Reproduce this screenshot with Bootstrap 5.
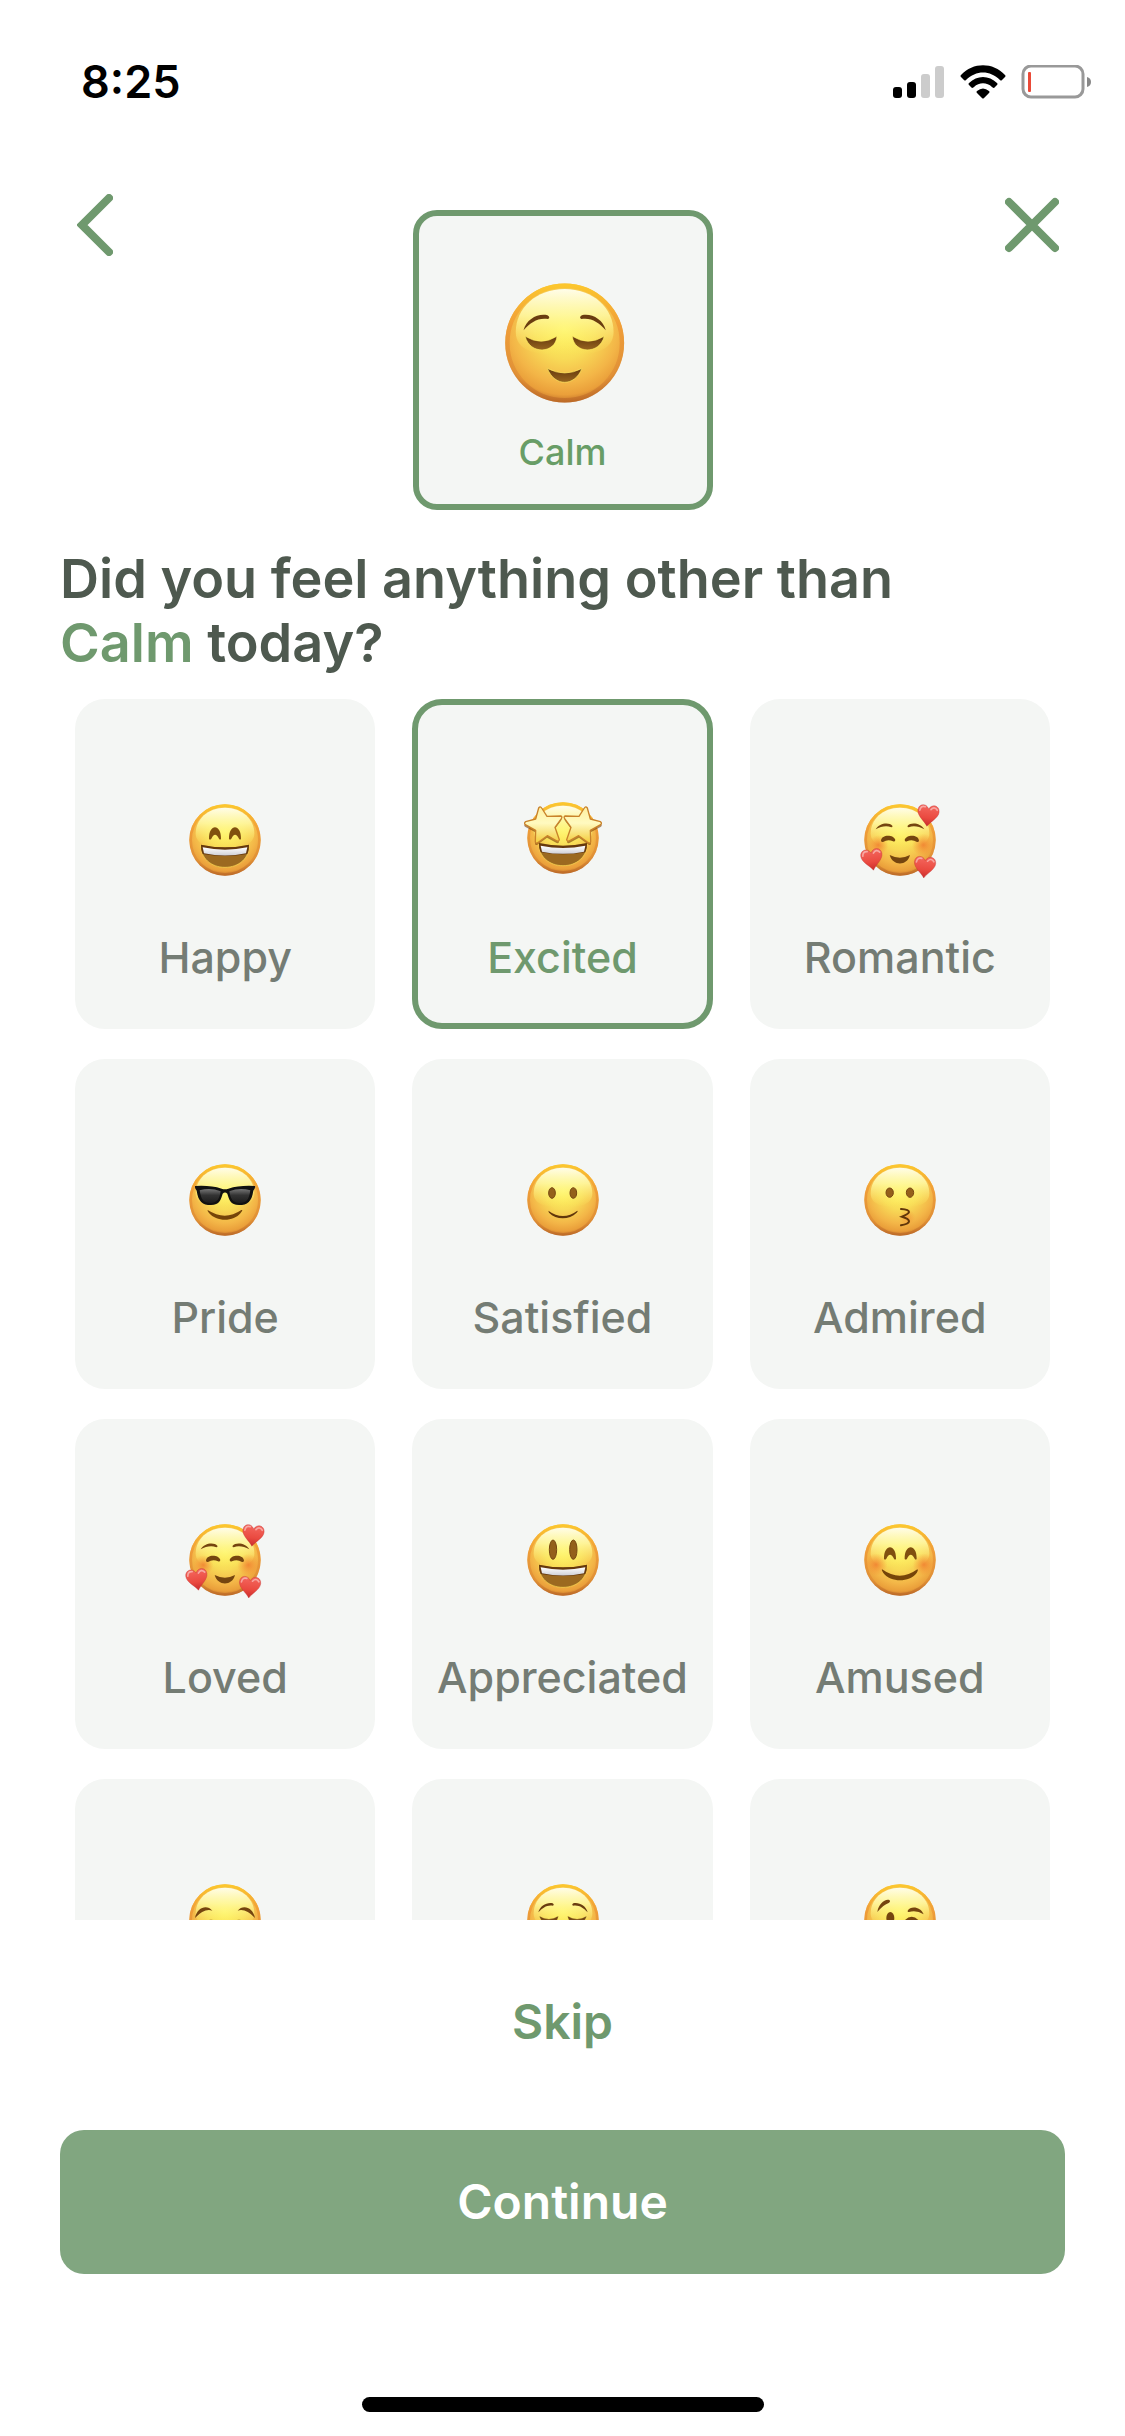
<!DOCTYPE html>
<html lang="en">
<head>
<meta charset="utf-8">
<meta name="viewport" content="width=device-width, initial-scale=1">
<title>Mood check-in</title>
<link href="https://cdn.jsdelivr.net/npm/bootstrap@5.3.0/dist/css/bootstrap.min.css" rel="stylesheet">
<style>
  :root { --leaf: #6f996e; --mist: #f4f6f4; }
  body { font-family: Inter, "Liberation Sans", sans-serif; background: #fff; color: #4e594f; }
  svg { display: block; }
  .screen { padding: 0; }
  .status { padding: 52px 34px 0 81px; }
  .clock { font-size: 45px; line-height: 60px; font-weight: 600; color: #000; }
  .top { padding: 82px 66px 0 77px; }
  .top .side { flex: 1 1 0; }
  .plain { background: none; border: 0; padding: 0; color: var(--leaf); }
  .chosen { width: 300px; margin: 16px 0 0 -11px; padding: 57px 0 30px; border: 6px solid var(--leaf); border-radius: 24px; background: var(--mist); gap: 17px; }
  .chosen-name { font-size: 36px; line-height: 44px; font-weight: 500; color: #689d66; }
  .question { font-size: 54px; line-height: 64px; font-weight: 600; margin: 0; padding: 37px 60px 24px; }
  .leaf { color: var(--leaf); }
  .moods { min-height: 0; padding: 0 75px; overflow-x: hidden; overflow-y: auto; scrollbar-width: none; }
  .moods::-webkit-scrollbar { display: none; }
  .moods .row { --bs-gutter-x: 37px; --bs-gutter-y: 30px; }
  .mood { width: 100%; padding: 93px 0 41px; gap: 50px; border: 6px solid transparent; border-radius: 30px; background: var(--mist); color: #747c74; font-size: 43px; line-height: 50px; font-weight: 500; }
  .mood[aria-pressed="true"] { border-color: var(--leaf); color: var(--leaf); }
  .actions { padding: 72px 60px 0; }
  .skip { font-size: 48px; line-height: 60px; font-weight: 600; }
  .go { margin-top: 78px; padding: 42px 0; border: 0; border-radius: 24px; font-size: 48px; line-height: 60px; font-weight: 600; color: #fff; background: #81a680; }
  .home { padding: 123px 0 24px; }
  .home-bar { width: 402px; height: 15px; border-radius: 8px; background: #000; }
</style>
</head>
<body>
<svg width="0" height="0" class="position-absolute" aria-hidden="true">
  <defs>
    <radialGradient id="skin" cx="0.5" cy="0.38" r="0.63">
      <stop offset="0" stop-color="#fff562"/><stop offset=".4" stop-color="#f8db57"/>
      <stop offset=".72" stop-color="#f3b547"/><stop offset=".88" stop-color="#ea9f3a"/><stop offset="1" stop-color="#bd6a26"/>
    </radialGradient>
    <linearGradient id="rim" x1="0" y1="0" x2="0" y2="1">
      <stop offset="0" stop-color="#fcc62d"/><stop offset=".35" stop-color="#f09a36" stop-opacity=".85"/><stop offset=".8" stop-color="#d47d30" stop-opacity=".4"/><stop offset="1" stop-color="#b86526" stop-opacity=".6"/>
    </linearGradient>
    <linearGradient id="shine" x1="0" y1="0" x2="0" y2="1">
      <stop offset="0" stop-color="#fffde9"/><stop offset=".4" stop-color="#fffaa4" stop-opacity=".85"/><stop offset="1" stop-color="#fff35c" stop-opacity="0"/>
    </linearGradient>
    <linearGradient id="dark" x1="0" y1="0" x2="0" y2="1"><stop offset="0" stop-color="#65380d"/><stop offset="1" stop-color="#97651f"/></linearGradient>
    <linearGradient id="teeth" x1="0" y1="0" x2="0" y2="1"><stop offset="0" stop-color="#fff"/><stop offset="1" stop-color="#cfd0d6"/></linearGradient>
    <radialGradient id="blush"><stop offset="0" stop-color="#f0762c" stop-opacity=".75"/><stop offset="1" stop-color="#f58a30" stop-opacity="0"/></radialGradient>
    <linearGradient id="red" x1="0" y1="0" x2="0" y2="1"><stop offset="0" stop-color="#f4675e"/><stop offset=".6" stop-color="#ea4a40"/><stop offset="1" stop-color="#c92b2c"/></linearGradient>
    <linearGradient id="gold" x1="0" y1="0" x2="0" y2="1"><stop offset="0" stop-color="#fff0a0"/><stop offset=".45" stop-color="#fffac0"/><stop offset="1" stop-color="#f3cb38"/></linearGradient>
    <linearGradient id="lens" x1="0" y1="0" x2="0" y2="1"><stop offset="0" stop-color="#777"/><stop offset=".45" stop-color="#333"/><stop offset="1" stop-color="#1c1c1c"/></linearGradient>

    <g id="face">
      <circle r="107" fill="url(#skin)"/>
      <circle r="103" fill="none" stroke="url(#rim)" stroke-width="8"/>
      <path d="M0-97C52-97 88-62 88-20C88 15 50 22 0 22S-88 15-88-20C-88-62-52-97 0-97Z" fill="url(#shine)"/>
    </g>
    <g id="grin">
      <path d="M-72 14Q0 30 72 14C74 54 42 82 0 82S-74 54-72 14Z" fill="#9b6920" stroke="#fbdc55" stroke-width="2"/>
      <path d="M-72 14Q0 30 72 14Q73 30 67 42Q0 54-67 42Q-73 30-72 14Z" fill="#65380d"/>
      <path d="M-67 22Q0 36 67 22L63 40Q0 53-63 40Z" fill="url(#teeth)"/>
    </g>
    <g id="heart">
      <path d="M0 32C-9 17-32 4-32-14C-32-34-8-38 0-20C8-38 32-34 32-14C32 4 9 17 0 32Z" fill="url(#red)" stroke="#bd2d2d" stroke-width="1"/>
      <path d="M-26-14Q-24-29-11-26M7-19Q17-31 26-19" fill="none" stroke="#fff" stroke-opacity=".45" stroke-width="5" stroke-linecap="round"/>
    </g>
    <g id="calm">
      <use href="#face"/>
      <g fill="#6a3d10">
        <path d="M-74-23C-69-43-48-54-31-50Q-25-46-30-43C-48-46-61-37-74-23Z"/>
        <path d="M74-23C69-43 48-54 31-50Q25-46 30-43C48-46 61-37 74-23Z"/>
      </g>
      <g fill="url(#dark)" stroke="#fff066" stroke-opacity=".7" stroke-width="1.5">
        <path d="M-71-12Q-42 6-14-12C-16 19-63 22-71-12Z"/><path d="M71-12Q42 6 14-12C16 19 63 22 71-12Z"/>
        <path d="M-31 46Q0 62 31 46C18 79-18 79-31 46Z"/>
      </g>
    </g>
    <g id="loving">
      <use href="#face"/>
      <circle cx="-65" cy="15" r="30" fill="url(#blush)"/><circle cx="70" cy="15" r="34" fill="url(#blush)"/>
      <g fill="#75450f">
        <path d="M-73-32C-62-52-32-54-23-43Q-21-38-26-38C-42-44-57-40-73-32Z"/>
        <path d="M73-32C62-52 32-54 23-43Q21-38 26-38C42-44 57-40 73-32Z"/>
        <path d="M-57 2C-55-18-18-16-14 0Q-15 6-21 4Q-36-4-51 6Q-56 7-57 2Z"/>
        <path d="M57 2C55-18 18-16 14 0Q15 6 21 4Q36-4 51 6Q56 7 57 2Z"/>
        <path d="M-31 45Q0 61 30 45C22 79-22 79-31 45Z"/>
      </g>
      <use href="#heart" transform="translate(84 -73) rotate(6)"/>
      <use href="#heart" transform="translate(-84 59) rotate(-8)"/>
      <use href="#heart" transform="translate(74 82) rotate(5)"/>
    </g>
    <path id="star-shape" d="M-73-96Q-68-103-64-96L-48-71L-7-72Q-1-70-5-64L-24-38L-11-1Q-12 5-18 3L-47-13L-77 9Q-84 10-83 3L-82-29L-113-46Q-118-51-112-55L-82-63Z"/>
    <g id="star">
      <use href="#star-shape" fill="url(#gold)" stroke="#c9822a" stroke-width="4" stroke-linejoin="round"/>
    </g>
  </defs>
</svg>

<div class="screen container-fluid vh-100 d-flex flex-column">
  <div class="status d-flex justify-content-between align-items-center">
    <span class="clock">8:25</span>
    <svg width="198" height="34" viewBox="0 0 198 34" role="img" aria-label="Signal, Wi-Fi and low battery">
      <rect y="22" width="9" height="11" rx="3"/><rect x="14" y="17" width="9" height="16" rx="3"/>
      <rect x="28" y="9" width="9" height="24" rx="3" fill="#ccc"/><rect x="42" y="1" width="9" height="32" rx="3" fill="#ccc"/>
      <path d="M68 10C80-3 100-3 112 10Q113 11 112 12L109 15Q108 16 107 15C97 5 83 5 73 15Q72 16 71 15L68 12Q67 11 68 10ZM76 18C84 10 96 10 104 18Q105 19 104 20L101 23Q100 23 99 22C94 17 86 17 81 22Q80 23 79 23L76 20Q75 19 76 18ZM84 26Q90 21 96 26Q97 27 96 28L91 33Q90 34 89 33L84 28Q83 27 84 26Z"/>
      <rect x="130" y="1" width="60" height="31" rx="8" fill="none" stroke="#999" stroke-width="3"/>
      <rect x="135" y="7" width="3" height="20" rx="1" fill="#ea4a38"/><path d="M194 12Q198 13 198 17T194 22Z" fill="#888"/>
    </svg>
  </div>

  <header class="top d-flex align-items-start">
    <div class="side d-flex justify-content-start">
      <button type="button" class="plain" aria-label="Back">
        <svg width="36" height="62" viewBox="0 0 36 62" fill="none" stroke="currentColor" stroke-width="8" stroke-linecap="round" stroke-linejoin="miter"><path d="M32 4L5 31L32 58"/></svg>
      </button>
    </div>
    <div class="chosen d-flex flex-column align-items-center">
      <svg width="140" height="140" viewBox="-129 -126 252 252" aria-hidden="true"><use href="#calm"/></svg>
      <span class="chosen-name">Calm</span>
    </div>
    <div class="side d-flex justify-content-end">
      <button type="button" class="plain" aria-label="Close">
        <svg width="54" height="62" viewBox="0 0 54 62" fill="none" stroke="currentColor" stroke-width="8" stroke-linecap="round"><path d="M4 8L50 54M50 8L4 54"/></svg>
      </button>
    </div>
  </header>

  <h1 class="question">Did you feel anything other than<br><span class="leaf">Calm</span> today?</h1>

  <main class="moods flex-grow-1">
    <div class="row row-cols-3">
      <div class="col"><button type="button" class="mood d-flex flex-column align-items-center" aria-pressed="false">
        <svg width="84" height="84" viewBox="-126 -126 252 252" aria-hidden="true"><use href="#face"/><g fill="#80500f"><path id="arch" d="M-48-3C-49-50-11-50-12-3Q-15 1-18-4Q-30-27-41-4Q-45 1-48-3Z"/><use href="#arch" x="60"/></g><use href="#grin"/></svg>
        <span>Happy</span></button></div>
      <div class="col"><button type="button" class="mood d-flex flex-column align-items-center" aria-pressed="true">
        <svg width="84" height="84" viewBox="-129 -126 252 252" aria-hidden="true"><use href="#face" y="-6"/><use href="#grin" y="-5"/><g fill="#7a3f08" opacity=".6"><use href="#star-shape" x="-1" y="6"/><use href="#star-shape" transform="translate(1 6) scale(-1 1)"/></g><use href="#star"/><use href="#star" transform="scale(-1 1)"/></svg>
        <span>Excited</span></button></div>
      <div class="col"><button type="button" class="mood d-flex flex-column align-items-center" aria-pressed="false">
        <svg width="84" height="84" viewBox="-126 -126 252 252" aria-hidden="true"><use href="#loving"/></svg>
        <span>Romantic</span></button></div>

      <div class="col"><button type="button" class="mood d-flex flex-column align-items-center" aria-pressed="false">
        <svg width="84" height="84" viewBox="-126 -126 252 252" aria-hidden="true"><use href="#face"/>
          <path d="M-90-42Q-45-45-10-34Q0-30 10-34Q45-45 90-42Q92-34 85-28C80 5 68 15 42 15C16 15 12-3 7-19Q0-26-7-19C-12-3-16 15-42 15C-68 15-80 5-85-28Q-92-34-90-42Z" fill="#111"/>
          <path d="M-76-29Q-44-39-13-26C-16-5-23 9-43 9C-64 9-72 0-76-29ZM76-29Q44-39 13-26C16-5 23 9 43 9C64 9 72 0 76-29Z" fill="url(#lens)"/>
          <path d="M-52 30Q0 64 49 30C55 29 50 35 47 39C26 66-26 66-48 39Q-54 32-52 30Z" fill="#754409"/></svg>
        <span>Pride</span></button></div>
      <div class="col"><button type="button" class="mood d-flex flex-column align-items-center" aria-pressed="false">
        <svg width="84" height="84" viewBox="-129 -126 252 252" aria-hidden="true"><use href="#face"/><g fill="#94601b" stroke="#784811" stroke-width="3"><ellipse cx="-33" cy="-21" rx="10" ry="16"/><ellipse cx="31" cy="-21" rx="10" ry="16"/></g><path d="M-44 32Q0 64 43 32Q46 33 41 38C18 60-20 60-42 38Z" fill="#61360a"/></svg>
        <span>Satisfied</span></button></div>
      <div class="col"><button type="button" class="mood d-flex flex-column align-items-center" aria-pressed="false">
        <svg width="84" height="84" viewBox="-126 -126 252 252" aria-hidden="true"><use href="#face"/><circle cx="22" cy="52" r="24" fill="url(#blush)" opacity=".6"/><g fill="#94601b" stroke="#784811" stroke-width="3"><ellipse cx="-31" cy="-22" rx="11" ry="14"/><ellipse cx="30" cy="-22" rx="11" ry="14"/></g><path d="M3 27Q27 29 27 36Q27 41 6 50Q27 56 27 64Q27 72 3 76" fill="none" stroke="#61360a" stroke-width="6" stroke-linecap="round"/></svg>
        <span>Admired</span></button></div>

      <div class="col"><button type="button" class="mood d-flex flex-column align-items-center" aria-pressed="false">
        <svg width="84" height="84" viewBox="-126 -126 252 252" aria-hidden="true"><use href="#loving"/></svg>
        <span>Loved</span></button></div>
      <div class="col"><button type="button" class="mood d-flex flex-column align-items-center" aria-pressed="false">
        <svg width="84" height="84" viewBox="-129 -126 252 252" aria-hidden="true"><use href="#face"/><g fill="#94601b" stroke="#784811" stroke-width="3"><ellipse cx="-30" cy="-31" rx="11" ry="29"/><ellipse cx="31" cy="-31" rx="11" ry="29"/></g><use href="#grin"/></svg>
        <span>Appreciated</span></button></div>
      <div class="col"><button type="button" class="mood d-flex flex-column align-items-center" aria-pressed="false">
        <svg width="84" height="84" viewBox="-126 -126 252 252" aria-hidden="true"><use href="#face"/><circle cx="-72" cy="14" r="34" fill="url(#blush)"/><circle cx="72" cy="14" r="34" fill="url(#blush)"/><g fill="#80500f"><use href="#arch"/><use href="#arch" x="62"/></g><path d="M-54 28Q0 66 52 28Q56 30 50 39C28 68-28 68-50 39Q-56 30-54 28Z" fill="#754409"/></svg>
        <span>Amused</span></button></div>

      <div class="col"><button type="button" class="mood d-flex flex-column align-items-center" aria-pressed="false" aria-label="Joyful">
        <svg width="84" height="84" viewBox="-126 -126 252 252" aria-hidden="true"><use href="#face"/><g fill="#75450f"><path d="M-90-6C-84-38-54-48-38-28Q-62-36-90-6ZM90-6C84-38 54-48 38-28Q62-36 90-6Z"/><path d="M-60 8Q-42-10-24 8ZM60 8Q42-10 24 8Z"/></g></svg></button></div>
      <div class="col"><button type="button" class="mood d-flex flex-column align-items-center" aria-pressed="false" aria-label="Relieved">
        <svg width="84" height="84" viewBox="-129 -126 252 252" aria-hidden="true"><use href="#calm"/></svg></button></div>
      <div class="col"><button type="button" class="mood d-flex flex-column align-items-center" aria-pressed="false" aria-label="Flirty">
        <svg width="84" height="84" viewBox="-126 -126 252 252" aria-hidden="true"><use href="#face"/><g fill="#75450f"><path d="M-68-24C-64-48-46-64-32-60Q-27-55-34-51Q-49-46-68-24Z"/><path d="M23-28C32-43 62-40 71-17Q49-31 27-24Q22-23 23-28Z"/><ellipse cx="-29" cy="-6" rx="12" ry="18"/><path d="M14 1Q35-21 56 1L50 10H18Z"/></g></svg></button></div>
    </div>
  </main>

  <footer>
    <div class="actions d-flex flex-column align-items-stretch">
      <button type="button" class="plain skip align-self-center">Skip</button>
      <button type="button" class="go">Continue</button>
    </div>
    <div class="home d-flex justify-content-center"><div class="home-bar"></div></div>
  </footer>
</div>
<script src="https://cdn.jsdelivr.net/npm/bootstrap@5.3.0/dist/js/bootstrap.bundle.min.js"></script>
</body>
</html>
